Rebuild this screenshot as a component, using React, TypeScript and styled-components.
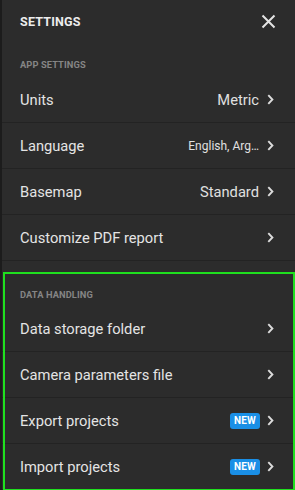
import React from 'react'
import styled, { createGlobalStyle } from 'styled-components'

const GlobalStyle = createGlobalStyle`
  html, body {
    margin: 0;
    padding: 0;
    background: #1c1c1c;
  }
  body {
    font-family: Roboto, "Liberation Sans", sans-serif;
    -webkit-font-smoothing: antialiased;
  }
`

const Screen = styled.div`
  display: flex;
  width: 295px;
  height: 490px;
  overflow: hidden;
  background: #1c1c1c;
`

const Panel = styled.div`
  flex: 1;
  margin-left: 2px;
  background: #2c2c2c;
  display: flex;
  flex-direction: column;
`

const Header = styled.div`
  height: 45px;
  display: flex;
  align-items: center;
  justify-content: space-between;
  padding: 0 19px 0 18px;
  box-sizing: border-box;
`

const Title = styled.div`
  font-size: 12.5px;
  font-weight: 700;
  color: #ececec;
  letter-spacing: 0.2px;
`

const CloseButton = styled.button`
  border: 0;
  background: none;
  padding: 0;
  width: 16px;
  height: 16px;
  margin-top: 1px;
  display: flex;
  align-items: center;
  justify-content: center;
  cursor: pointer;
`

const Section = styled.div<{ $highlight?: boolean }>`
  position: relative;
  margin-top: ${p => (p.$highlight ? '11px' : '0')};
  ${p =>
    p.$highlight &&
    `
    &::after {
      content: '';
      position: absolute;
      left: 1px;
      right: 0;
      top: 0;
      height: 215px;
      border: 2px solid #1fe01f;
      pointer-events: none;
    }
  `}
`

const SectionLabel = styled.div<{ $top: number; $bottom: number }>`
  padding: ${p => p.$top}px 18px ${p => p.$bottom}px;
  font-size: 9.3px;
  line-height: 11px;
  font-weight: 700;
  color: #858585;
  letter-spacing: 0.1px;
`

const Row = styled.div`
  height: 46px;
  box-sizing: border-box;
  display: flex;
  align-items: center;
  padding: 0 21px 0 18px;
  border-bottom: 1px solid #232323;
`

const Label = styled.div`
  flex: 1;
  font-size: 14.7px;
  color: #e4e4e4;
  white-space: nowrap;
`

const Value = styled.div<{ $small?: boolean }>`
  font-size: ${p => (p.$small ? '12px' : '14.7px')};
  color: #e0e0e0;
  white-space: nowrap;
  margin-right: 8px;
`

const Badge = styled.span`
  background: #1a8fe6;
  color: #fff;
  font-size: 10px;
  font-weight: 700;
  line-height: 16px;
  height: 16px;
  padding: 0 4px;
  border-radius: 3px;
  margin-right: 7px;
  letter-spacing: 0.2px;
`

const Chevron = () => (
  <svg width="7" height="11" viewBox="0 0 7 11" fill="none">
    <path d="M1.3 1.2 5.4 5.5 1.3 9.8" stroke="#dcdcdc" strokeWidth="1.9" />
  </svg>
)

const CloseIcon = () => (
  <svg width="15" height="15" viewBox="0 0 15 15">
    <path d="M1.5 1.5 13.5 13.5M13.5 1.5 1.5 13.5" stroke="#e4e4e4" strokeWidth="2" />
  </svg>
)

type Item = { label: string; value?: string; small?: boolean; isNew?: boolean }

const appSettings: Item[] = [
  { label: 'Units', value: 'Metric' },
  { label: 'Language', value: 'English, Arg…', small: true },
  { label: 'Basemap', value: 'Standard' },
  { label: 'Customize PDF report' },
]

const dataHandling: Item[] = [
  { label: 'Data storage folder' },
  { label: 'Camera parameters file' },
  { label: 'Export projects', isNew: true },
  { label: 'Import projects', isNew: true },
]

const SettingsRow: React.FC<Item> = ({ label, value, small, isNew }) => (
  <Row>
    <Label>{label}</Label>
    {value && <Value $small={small}>{value}</Value>}
    {isNew && <Badge>NEW</Badge>}
    <Chevron />
  </Row>
)

export default function App() {
  return (
    <Screen>
      <GlobalStyle />
      <Panel>
        <Header>
          <Title>SETTINGS</Title>
          <CloseButton aria-label="Close">
            <CloseIcon />
          </CloseButton>
        </Header>
        <Section>
          <SectionLabel $top={17} $bottom={7}>APP SETTINGS</SectionLabel>
          {appSettings.map(item => (
            <SettingsRow key={item.label} {...item} />
          ))}
        </Section>
        <Section $highlight>
          <SectionLabel $top={17} $bottom={6}>DATA HANDLING</SectionLabel>
          {dataHandling.map(item => (
            <SettingsRow key={item.label} {...item} />
          ))}
        </Section>
      </Panel>
    </Screen>
  )
}
